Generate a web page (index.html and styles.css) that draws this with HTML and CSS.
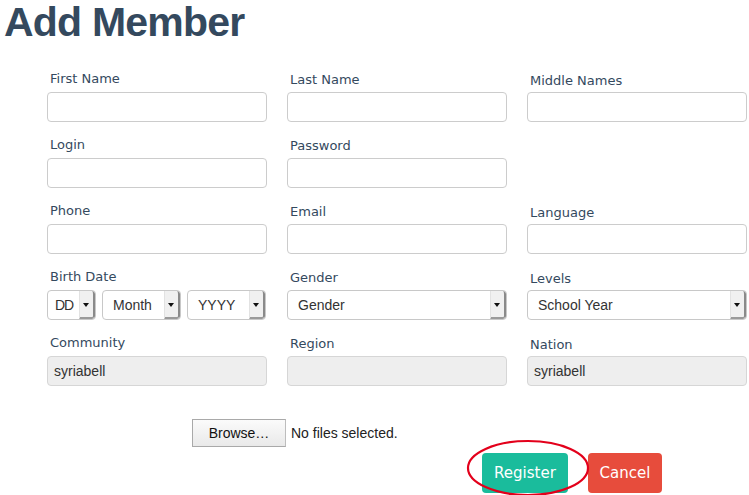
FILE: index.html
```html
<!DOCTYPE html>
<html>
<head>
<meta charset="utf-8">
<link rel="stylesheet" href="styles.css">
</head>
<body>
<h1 class="title">Add Member</h1>
<form class="form">
  <div class="grid">
    <div class="field c1"><label>First Name</label><div class="input"></div></div>
    <div class="field c2"><label>Last Name</label><div class="input"></div></div>
    <div class="field c3"><label>Middle Names</label><div class="input"></div></div>

    <div class="field c1"><label>Login</label><div class="input"></div></div>
    <div class="field c2"><label>Password</label><div class="input"></div></div>
    <div class="field c3"></div>

    <div class="field c1"><label>Phone</label><div class="input"></div></div>
    <div class="field c2"><label>Email</label><div class="input"></div></div>
    <div class="field c3"><label>Language</label><div class="input"></div></div>

    <div class="field c1"><label>Birth Date</label>
      <div class="dates">
        <div class="select dd"><span class="val">DD</span><span class="arrow"></span></div>
        <div class="select mm"><span class="val">Month</span><span class="arrow"></span></div>
        <div class="select yy"><span class="val">YYYY</span><span class="arrow"></span></div>
      </div>
    </div>
    <div class="field c2"><label>Gender</label>
      <div class="select"><span class="val">Gender</span><span class="arrow"></span></div>
    </div>
    <div class="field c3"><label>Levels</label>
      <div class="select"><span class="val">School Year</span><span class="arrow"></span></div>
    </div>

    <div class="field c1"><label>Community</label><div class="input disabled">syriabell</div></div>
    <div class="field c2"><label>Region</label><div class="input disabled"></div></div>
    <div class="field c3"><label>Nation</label><div class="input disabled">syriabell</div></div>
  </div>

  <div class="file-row">
    <span class="browse">Browse…</span>
    <span class="file-status">No files selected.</span>
  </div>

  <div class="actions">
    <span class="btn register">Register</span>
    <span class="btn cancel">Cancel</span>
    <svg class="circle" width="130" height="62" viewBox="0 0 130 62">
      <ellipse cx="64" cy="30" rx="60" ry="27" fill="none" stroke="#e3001b" stroke-width="2.2"/>
    </svg>
  </div>
</form>
</body>
</html>
```

FILE: styles.css
```css
html, body {
  margin: 0;
  padding: 0;
  background: #ffffff;
}
body {
  width: 749px;
  height: 495px;
  overflow: hidden;
  position: relative;
}
.title {
  margin: 0;
  padding-left: 4px;
  font-family: "Liberation Sans", Arial, sans-serif;
  font-weight: bold;
  font-size: 41px;
  letter-spacing: -0.8px;
  line-height: 45px;
  height: 45px;
  color: #34495e;
}
.form {
  padding-left: 47px;
}
.grid {
  display: grid;
  grid-template-columns: 220px 220px 220px;
  column-gap: 20px;
  row-gap: 15px;
  margin-top: 26px;
}
.field label {
  display: block;
  height: 16px;
  line-height: 16px;
  margin-bottom: 5px;
  padding-left: 3px;
  font-family: "DejaVu Sans", Verdana, sans-serif;
  font-size: 13px;
  color: #34495e;
}
.field.c2 label { position: relative; top: 1px; }
.field.c3 label { position: relative; top: 2px; }
.input {
  box-sizing: border-box;
  height: 30px;
  border: 1px solid #cccccc;
  border-radius: 4px;
  background: #ffffff;
  font-family: "Liberation Sans", Arial, sans-serif;
  font-size: 14px;
  line-height: 28px;
  padding-left: 6px;
  color: #333333;
}
.input.disabled {
  background: #eeeeee;
  border-color: #d6d6d6;
}
.dates {
  display: flex;
  gap: 6px;
  margin-top: 1px;
}
.select {
  box-sizing: border-box;
  height: 30px;
  border: 1px solid #c8c8c8;
  border-radius: 4px;
  background: #ffffff;
  display: flex;
  align-items: stretch;
  overflow: hidden;
  font-family: "Liberation Sans", Arial, sans-serif;
  font-size: 14px;
  color: #333333;
}
.field > .select {
  margin-top: 1px;
}
.select .val {
  flex: 1;
  line-height: 29px;
  padding-left: 10px;
  overflow: hidden;
  white-space: nowrap;
}
.select .arrow {
  width: 13px;
  flex: none;
  background: #f0f0f0;
  border-left: 1px solid #e2e2e2;
  border-right: 2px solid #8a8a8a;
  border-bottom: 2px solid #9a9a9a;
  border-radius: 0 3px 3px 0;
  position: relative;
}
.select .arrow::after {
  content: "";
  position: absolute;
  left: 3px;
  top: 12px;
  border-left: 3px solid transparent;
  border-right: 3px solid transparent;
  border-top: 4px solid #111111;
}
.select.dd { width: 49px; }
.select.dd .val { padding-left: 7px; letter-spacing: -1px; }
.select.mm { width: 79px; }
.select.yy { width: 79px; }
.file-row {
  display: flex;
  align-items: center;
  margin-top: 33px;
  padding-left: 145px;
  font-family: "Liberation Sans", Arial, sans-serif;
  font-size: 14px;
}
.browse {
  box-sizing: border-box;
  width: 94px;
  height: 28px;
  border: 1px solid #a9a9a9;
  border-right-color: #bdbdbd;
  background: linear-gradient(#fbfbfb, #e9e9e9);
  text-align: center;
  line-height: 26px;
  color: #111111;
}
.file-status {
  margin-left: 5px;
  color: #222222;
}
.actions {
  position: relative;
  display: flex;
  gap: 20px;
  margin-top: 6px;
  padding-left: 435px;
}
.btn {
  box-sizing: border-box;
  height: 40px;
  border-radius: 4px;
  font-family: "DejaVu Sans", Verdana, sans-serif;
  font-size: 15px;
  line-height: 40px;
  color: #ffffff;
  text-align: center;
}
.register {
  width: 86px;
  background: #1abc9c;
}
.cancel {
  width: 74px;
  background: #e74c3c;
}
.circle {
  position: absolute;
  left: 417px;
  top: -15px;
}
```
